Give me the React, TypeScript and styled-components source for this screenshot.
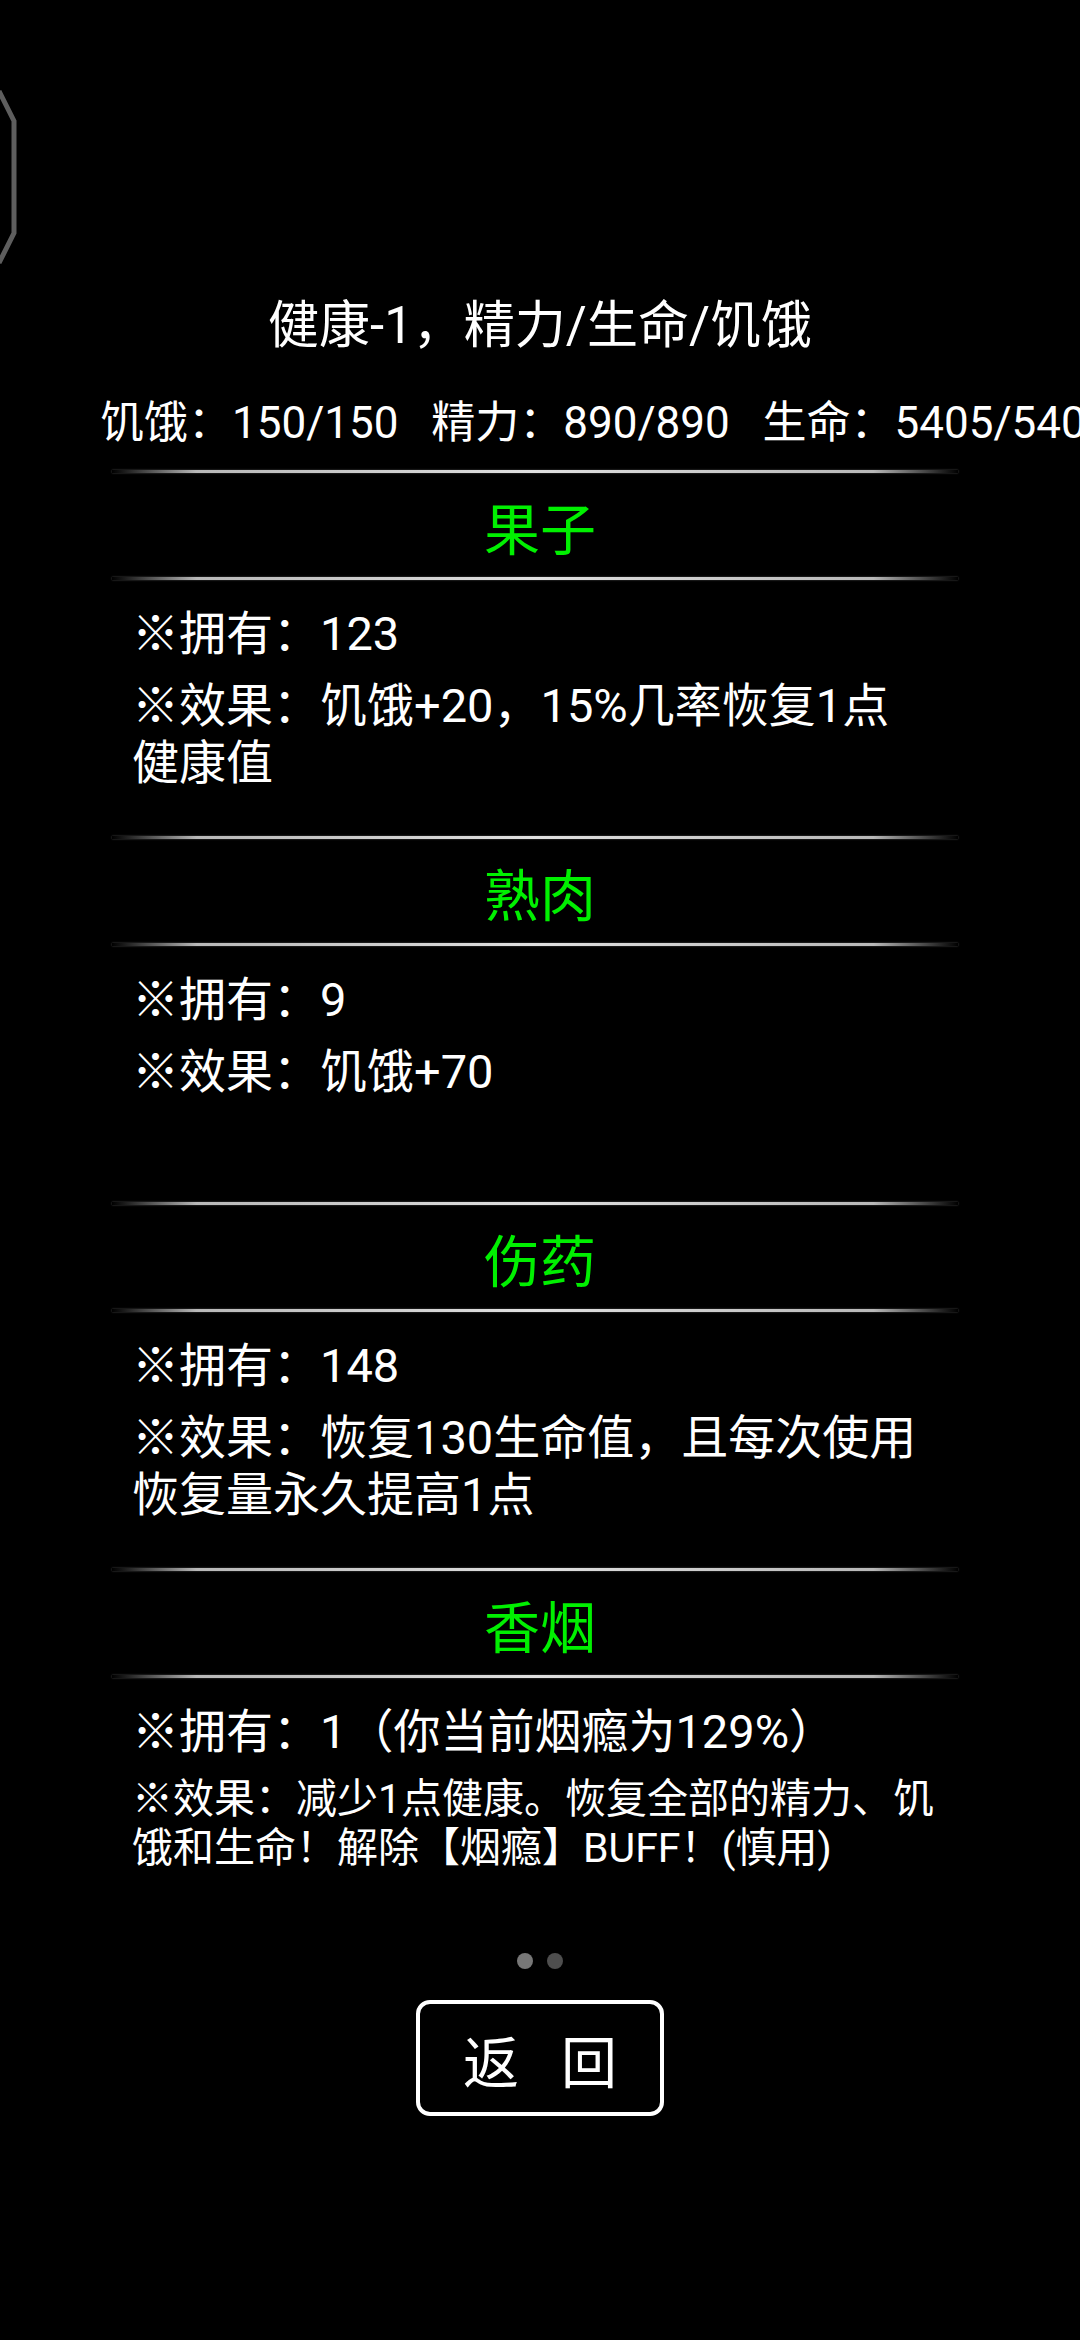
import styled, { createGlobalStyle } from "styled-components";

const GlobalStyle = createGlobalStyle`
  html, body {
    margin: 0;
    padding: 0;
    background: #000;
  }
  body {
    font-family: Roboto, "Noto Sans CJK SC", "Noto Sans", sans-serif;
    color: #fff;
  }
`;

type Item = {
  name: string;
  own: string;
  effect: string[];
  small?: boolean;
};

const items: Item[] = [
  { name: "果子", own: "123", effect: ["饥饿+20，15%几率恢复1点", "健康值"] },
  { name: "熟肉", own: "9", effect: ["饥饿+70"] },
  { name: "伤药", own: "148", effect: ["恢复130生命值，且每次使用", "恢复量永久提高1点"] },
  {
    name: "香烟",
    own: "1（你当前烟瘾为129%）",
    effect: ["减少1点健康。恢复全部的精力、饥", "饿和生命！解除【烟瘾】BUFF！(慎用)"],
    small: true,
  },
];

export default function App() {
  return (
    <>
      <GlobalStyle />
      <Page>
        <SideHandle width="20" height="180" viewBox="0 0 20 180">
          <polyline points="-1,3 14,33 14,145 -1,175" />
        </SideHandle>

        <Header>健康-1，精力/生命/饥饿</Header>
        <Stats>饥饿：150/150   精力：890/890   生命：5405/5405</Stats>

        {items.map((item, i) => (
          <section key={item.name}>
            <Divider />
            <ItemTitle>{item.name}</ItemTitle>
            <Divider />
            <ItemBody $last={i === items.length - 1}>
              <Line>※拥有：{item.own}</Line>
              <Line $small={item.small}>
                {item.effect.map((text, j) => (
                  <span key={j}>
                    {j === 0 ? "※效果：" : ""}
                    {text}
                  </span>
                ))}
              </Line>
            </ItemBody>
          </section>
        ))}

        <Dots>
          <Dot $active />
          <Dot />
        </Dots>

        <BackButton>
          <span>返</span>
          <span>回</span>
        </BackButton>
      </Page>
    </>
  );
}

const Page = styled.div`
  position: relative;
  width: 1080px;
  min-height: 2340px;
  overflow: hidden;
  background: #000;
  display: flex;
  flex-direction: column;
  padding-top: 296px;
  box-sizing: border-box;
`;

const SideHandle = styled.svg`
  position: absolute;
  left: 0;
  top: 88px;
  overflow: visible;

  polyline {
    fill: none;
    stroke: #5e5e5e;
    stroke-width: 5;
    stroke-linejoin: miter;
  }
`;

const Header = styled.div`
  font-size: 51px;
  line-height: 60px;
  text-align: center;
`;

const Stats = styled.div`
  margin-top: 39px;
  padding-left: 100px;
  font-size: 44px;
  line-height: 56px;
  white-space: pre;
  overflow: hidden;
  margin-bottom: 19px;
`;

const Divider = styled.div`
  margin-left: 112px;
  width: 846px;
  height: 3px;
  background: linear-gradient(
    to right,
    rgba(200, 200, 200, 0) 0%,
    #b8b8b8 10%,
    #e0e0e0 50%,
    #b8b8b8 90%,
    rgba(200, 200, 200, 0) 100%
  );
  box-shadow: 0 0 2px rgba(255, 255, 255, 0.35);
`;

const ItemTitle = styled.div`
  height: 104px;
  display: flex;
  align-items: center;
  justify-content: center;
  font-size: 56px;
  color: #00f000;
`;

const ItemBody = styled.div<{ $last?: boolean }>`
  box-sizing: border-box;
  height: ${(p) => (p.$last ? "auto" : "256px")};
  padding: 25px 0 0 132px;
  width: 1000px;
`;

const Line = styled.p<{ $small?: boolean }>`
  margin: 0;
  font-size: ${(p) => (p.$small ? "41px" : "47px")};
  line-height: ${(p) => (p.$small ? "49px" : "57px")};
  white-space: nowrap;

  & + & {
    margin-top: ${(p) => (p.$small ? "15px" : "14px")};
  }

  span {
    display: block;
  }
`;

const Dots = styled.div`
  margin-top: 80px;
  display: flex;
  justify-content: center;
  gap: 14px;
`;

const Dot = styled.span<{ $active?: boolean }>`
  width: 16px;
  height: 16px;
  border-radius: 50%;
  background: ${(p) => (p.$active ? "#777" : "#4e4e4e")};
`;

const BackButton = styled.button`
  align-self: center;
  margin-top: 31px;
  width: 248px;
  height: 116px;
  box-sizing: border-box;
  border: 4px solid #fff;
  border-radius: 14px;
  background: #000;
  color: #fff;
  font-family: "Noto Sans CJK SC", "Noto Sans", sans-serif;
  font-size: 56px;
  display: flex;
  align-items: center;
  justify-content: center;
  gap: 42px;
  padding: 0;
`;
